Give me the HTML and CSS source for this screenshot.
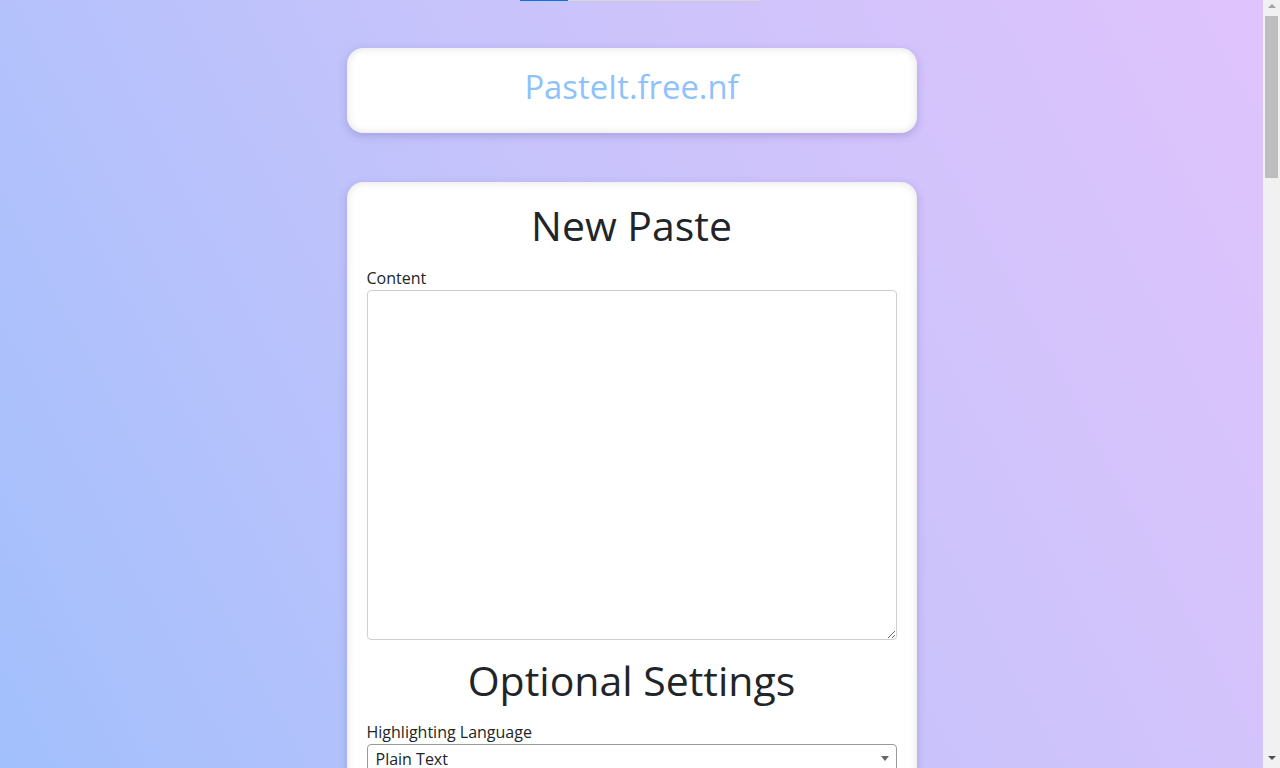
FILE: index.html
```html
<!DOCTYPE html>
<html lang="en">
<head>
<meta charset="utf-8">
<title>PasteIt.free.nf</title>
<link rel="stylesheet" href="styles.css">
</head>
<body>
<div class="progress"><div class="progress-fill" style="width:20%"></div></div>
<main class="page">
  <header class="card header-card">
    <div class="brand">PasteIt.free.nf</div>
  </header>
  <section class="card form-card">
    <h1 class="title">New Paste</h1>
    <label class="field-label" for="content">Content</label>
    <textarea id="content" class="content-input"></textarea>
    <h2 class="title sub">Optional Settings</h2>
    <label class="field-label" for="lang">Highlighting Language</label>
    <div class="select-wrap">
      <select id="lang" class="select">
        <option>Plain Text</option>
        <option>JavaScript</option>
        <option>Python</option>
      </select>
    </div>
    <label class="field-label" for="exp">Paste Expiration</label>
    <div class="select-wrap">
      <select id="exp" class="select">
        <option>Never</option>
        <option>1 Hour</option>
        <option>1 Day</option>
      </select>
    </div>
    <label class="field-label" for="title">Paste Title</label>
    <input id="title" class="text-input" type="text">
    <label class="field-label" for="pw">Password</label>
    <input id="pw" class="text-input" type="password">
    <button class="submit" type="button">Create New Paste</button>
  </section>
</main>
<div class="scrollbar" aria-hidden="true">
  <div class="sb-arrow sb-up"></div>
  <div class="sb-track"><div class="sb-thumb"></div></div>
  <div class="sb-arrow sb-down"></div>
</div>
</body>
</html>
```
FILE: styles.css
```css
html, body {
  margin: 0;
  padding: 0;
}
html {
  overflow-y: hidden;
}
body {
  font-family: "Open Sans", "Noto Sans", sans-serif;
  color: #212529;
  background: linear-gradient(62deg, #a2c0fc 0%, #c7c3fb 50%, #e0c3fc 100%);
  background-attachment: fixed;
  min-height: 3480px;
  margin-right: 17px;
}
.progress {
  position: absolute;
  top: 0;
  left: 520px;
  width: 240px;
  height: 1px;
  background: #d6d6d6;
}
.progress-fill {
  height: 100%;
  background: #0a74da;
}
.page {
  display: flex;
  flex-direction: column;
  align-items: center;
  padding-top: 48px;
  gap: 49px;
}
.card {
  width: 570px;
  box-sizing: border-box;
  background: #fff;
  border-radius: 16px;
  box-shadow: inset 0 0 8px rgba(0, 0, 0, 0.12), 0 3px 8px rgba(80, 60, 150, 0.25);
}
.header-card {
  height: 85px;
  display: flex;
  align-items: center;
  justify-content: center;
}
.brand {
  font-size: 32.8px;
  color: #8ec2fc;
  line-height: 1;
  margin-top: -6px;
}
.form-card {
  padding: 20px;
  display: flex;
  flex-direction: column;
}
.title {
  margin: -1px 0 17px;
  font-size: 41px;
  font-weight: 400;
  line-height: 48px;
  text-align: center;
}
.title.sub {
  margin: 16px 0 16px;
}
.field-label {
  font-size: 16px;
  line-height: 24px;
}
.content-input {
  display: block;
  height: 350px;
  box-sizing: border-box;
  border: 1px solid #cfcfcf;
  border-radius: 4px;
  font-family: inherit;
  font-size: 16px;
  padding: 8px;
  margin: 0;
}
.select-wrap {
  position: relative;
  margin-bottom: 16px;
}
.select-wrap::after {
  content: "";
  position: absolute;
  right: 8px;
  top: 12px;
  border-left: 4px solid transparent;
  border-right: 4px solid transparent;
  border-top: 5px solid #666;
  pointer-events: none;
}
.select {
  width: 100%;
  height: 30px;
  -webkit-appearance: none;
  appearance: none;
  border: 1px solid #9a9a9a;
  border-radius: 4px;
  background: #fff;
  font-family: inherit;
  font-size: 16px;
  color: #212529;
  padding: 0 8px;
  line-height: 28px;
}
.text-input {
  height: 32px;
  border: 1px solid #cfcfcf;
  border-radius: 4px;
  margin-bottom: 16px;
  font-family: inherit;
  font-size: 16px;
  padding: 0 8px;
}
.submit {
  margin-top: 8px;
  height: 44px;
  border: none;
  border-radius: 6px;
  background: #8ec2fc;
  color: #fff;
  font-family: inherit;
  font-size: 18px;
}
.scrollbar {
  position: fixed;
  top: 0;
  right: 0;
  width: 17px;
  height: 100vh;
  background: #f1f1f1;
  display: flex;
  flex-direction: column;
  align-items: center;
}
.sb-arrow {
  width: 0;
  height: 0;
  border-left: 4px solid transparent;
  border-right: 4px solid transparent;
}
.sb-up {
  margin-top: 4px;
  margin-bottom: 4px;
  border-bottom: 4px solid #a3a3a3;
}
.sb-down {
  margin-top: 4px;
  margin-bottom: 8px;
  border-top: 4px solid #505050;
}
.sb-track {
  flex: 1;
  width: 100%;
  padding: 4px 2px 0;
  box-sizing: border-box;
}
.sb-thumb {
  height: 162px;
  background: #bdbdbd;
}
```
